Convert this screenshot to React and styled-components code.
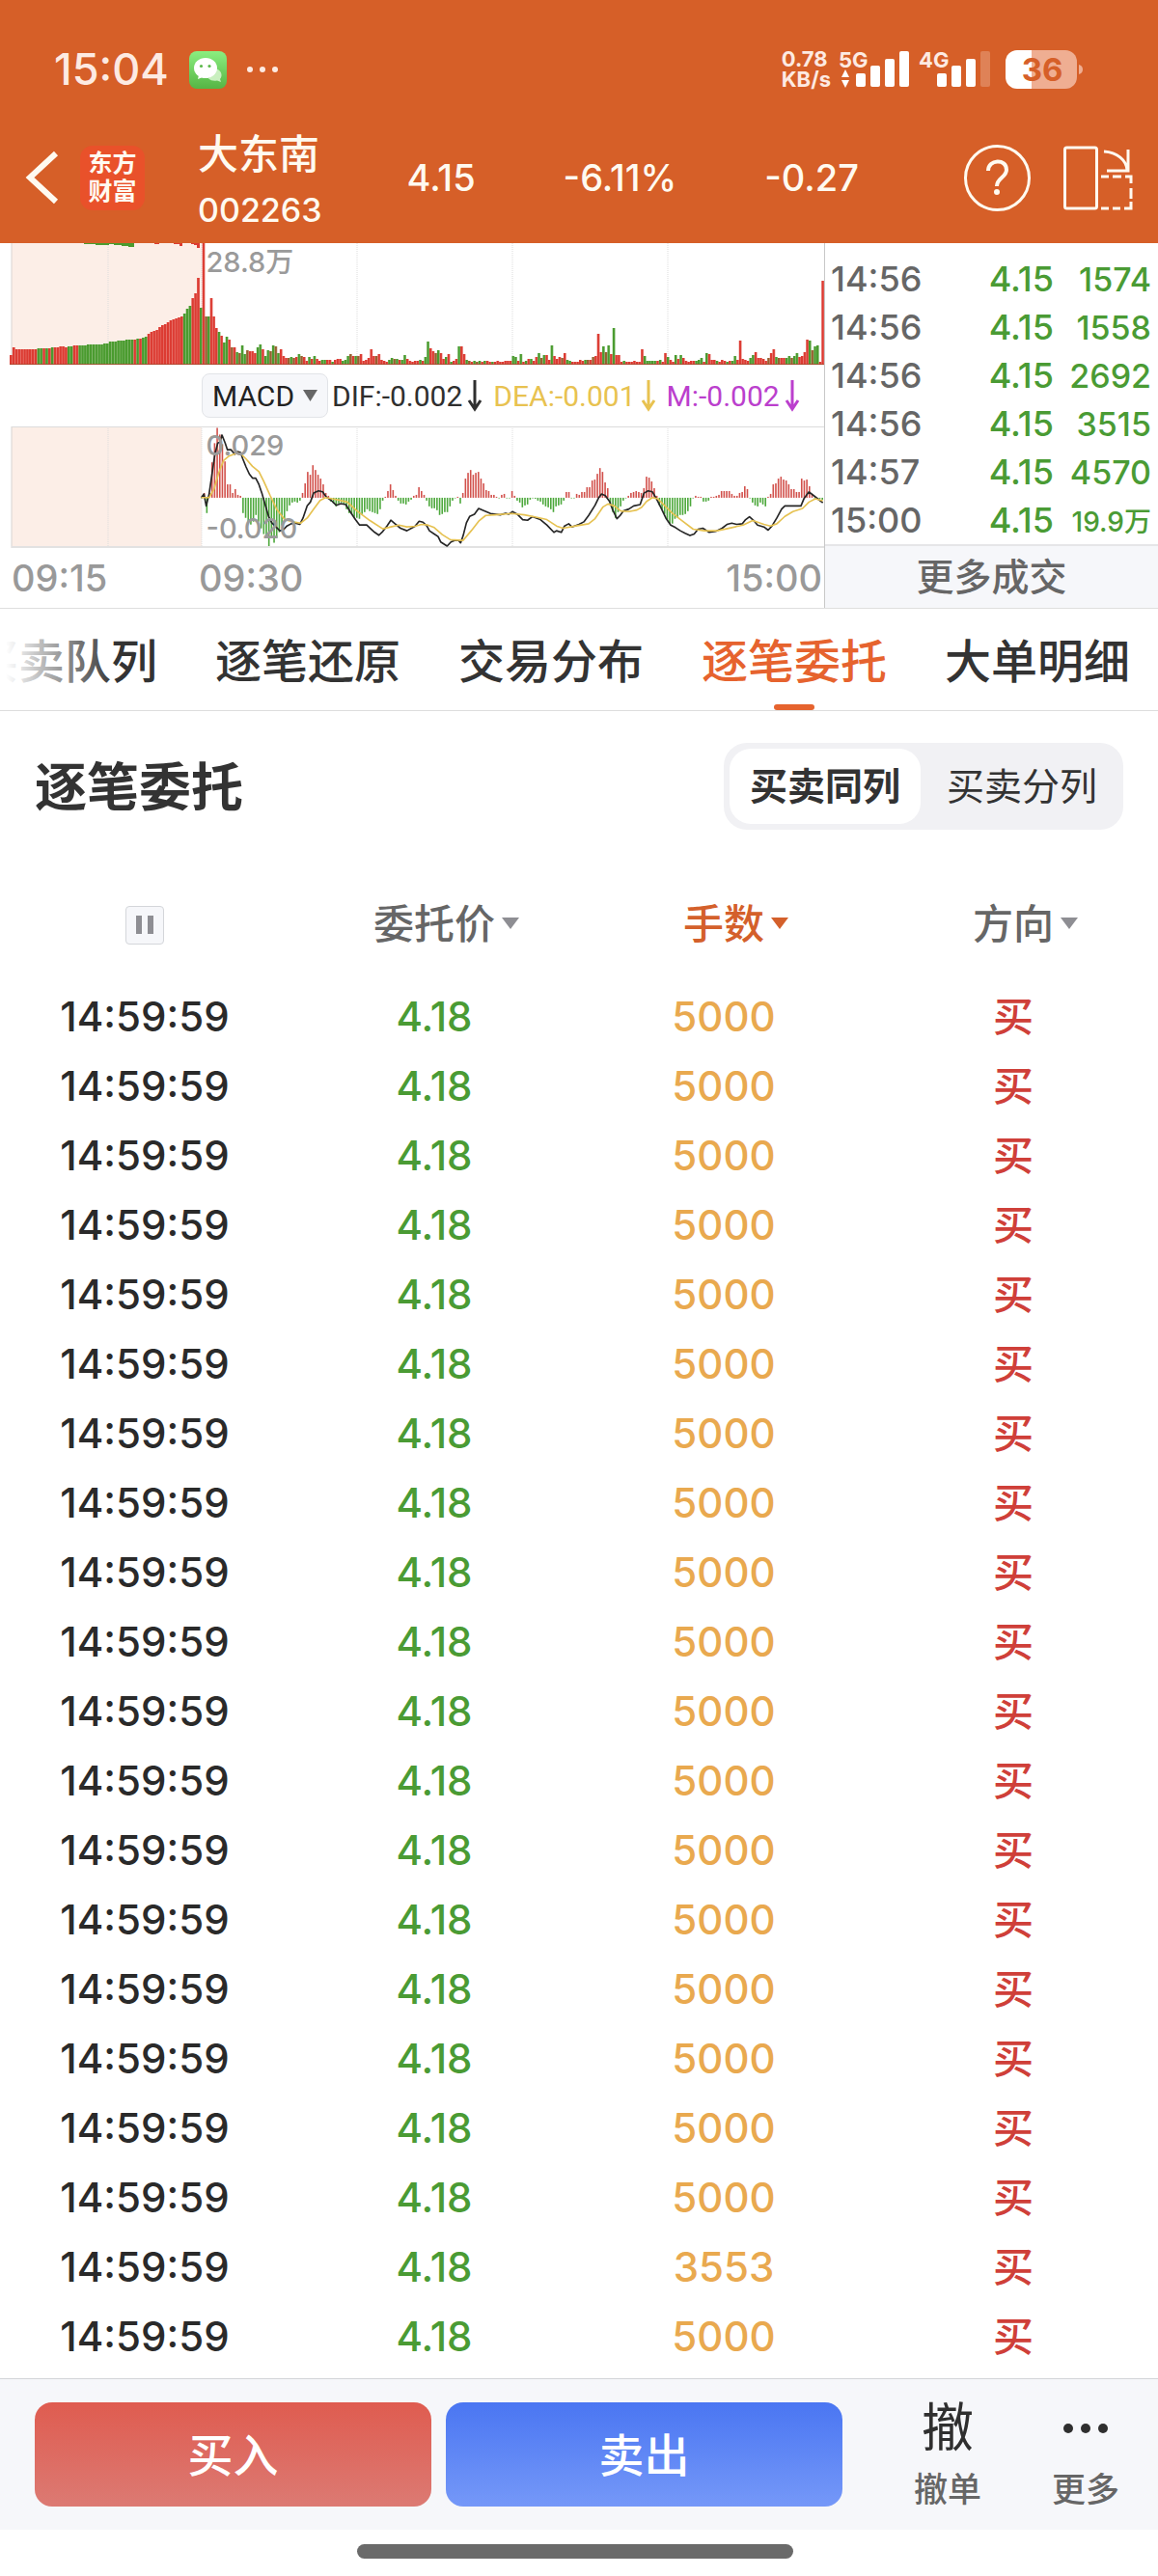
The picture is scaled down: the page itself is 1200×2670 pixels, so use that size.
import React, { useState } from 'react';
import styled, { createGlobalStyle } from 'styled-components';

const GlobalStyle = createGlobalStyle`
  * {
    box-sizing: border-box;
  }

  body {
    margin: 0;
    background: #fff;
    color: #2f2f2f;
    font-family: Inter, "Noto Sans CJK SC", sans-serif;
    font-weight: 500;
  }

  button, select {
    font: inherit;
    color: inherit;
    border: none;
    background: none;
    padding: 0;
    margin: 0;
  }

  svg {
    display: block;
    overflow: visible;
  }
`;

const Page = styled.div`
  display: flex;
  flex-direction: column;
`;

/* ---------- header ---------- */

const Header = styled.header`
  background: #d65f28;
  color: #fffaf0;
  height: 252px;
`;

const StatusBar = styled.div`
  height: 144px;
  padding: 0 78px 0 56px;
  display: flex;
  align-items: center;
  justify-content: space-between;
  color: #fdeae2;
`;

const StatusGroup = styled.div`
  display: flex;
  align-items: center;
  gap: ${({ $gap }) => $gap}px;
`;

const Clock = styled.span`
  font-size: 45px;
  line-height: 54px;
`;

const NetSpeed = styled.span`
  font-size: 22px;
  font-weight: 700;
  line-height: 21px;
`;

const NavBar = styled.div`
  height: 80px;
  padding: 0 26px;
  display: flex;
  align-items: center;
`;

const Logo = styled.span`
  width: 67px;
  height: 67px;
  margin-left: 23px;
  border-radius: 13px;
  background: #e9512a;
  font-size: 25px;
  font-weight: 700;
  line-height: 29px;
  padding-top: 4px;
  text-align: center;
`;

const StockName = styled.div`
  margin-left: 55px;
  padding-top: 10px;
  display: flex;
  flex-direction: column;
  font-size: 42px;
  line-height: 58px;
`;

const StockCode = styled.span`
  font-size: 34px;
`;

const Quote = styled.div`
  flex: 1;
  display: flex;
  justify-content: space-between;
  margin: 0 109px 0 88px;
  font-size: 38px;
  line-height: 48px;
`;

const NavActions = styled.div`
  display: flex;
  gap: 34px;
`;

/* ---------- chart and trades ---------- */

const Market = styled.section`
  display: flex;
  border-bottom: 1px solid #dedede;
`;

const Charts = styled.div`
  flex: 1;
  min-width: 0;
  border-right: 1px solid #c8c8c8;
`;

const Plot = styled.div`
  position: relative;

  svg {
    width: 100%;
    height: 126px;
    overflow: hidden;
  }
`;

const PlotLabel = styled.span`
  position: absolute;
  left: 25%;
  ${({ $end }) => ($end ? 'bottom: 0' : 'top: 0')};
  font-size: 29px;
  line-height: 40px;
  color: #9a9a9a;
`;

const IndicatorBar = styled.div`
  height: 64px;
  margin-left: 209px;
  display: flex;
  align-items: center;
  gap: 12px;
  font-family: "Liberation Sans Narrow", Roboto, sans-serif;
  font-size: 30px;
  font-weight: 400;
  white-space: nowrap;
`;

const Picker = styled.label`
  height: 46px;
  margin-right: -8px;
  padding: 0 10px;
  display: flex;
  align-items: center;
  gap: 8px;
  border: 1px solid #e2e4e8;
  border-radius: 8px;
  background: #f6f7fa;
  color: #222;

  select {
    appearance: none;
    outline: none;
  }

  svg {
    color: #666;
  }
`;

const Reading = styled.span`
  display: flex;
  align-items: center;
  gap: 6px;
  color: ${({ $color }) => $color};
`;

const TimeAxis = styled.div`
  height: 62px;
  padding: 0 2px 0 12px;
  display: grid;
  grid-template-columns: 194px 1fr auto;
  align-items: center;
  font-size: 38px;
  color: #999;
`;

const Trades = styled.div`
  width: 345px;
  display: flex;
  flex-direction: column;
`;

const TradeTable = styled.table`
  width: 100%;
  margin-top: 12px;
  border-collapse: collapse;
  font-size: 36px;

  td {
    height: 50px;
    padding: 0;
  }
`;

const TradeTime = styled.td`
  && {
    padding-left: 6px;
  }
  color: #666;
`;

const TradePrice = styled.td`
  text-align: right;
  color: #4a9b34;
`;

const TradeVolume = styled.td`
  width: 108px;
  text-align: right;
  color: #4a9b34;
  font-size: ${({ $small }) => ($small ? 28 : 34)}px;
  && {
    padding-right: 7px;
  }
`;

const MoreTrades = styled.button`
  flex: 1;
  border-top: 2px solid #e6e6e8;
  background: #f6f7fa;
  color: #666;
  font-size: 39px;
  line-height: 48px;
`;

/* ---------- tabs ---------- */

const TabBar = styled.nav`
  position: relative;
  height: 106px;
  overflow: hidden;
  border-bottom: 1px solid #dedede;

  &::before {
    content: "";
    position: absolute;
    z-index: 1;
    inset: 0 auto 0 0;
    width: 120px;
    background: linear-gradient(90deg, #fff 5%, rgba(255, 255, 255, 0));
  }
`;

const TabList = styled.div`
  height: 100%;
  margin-left: -29px;
  display: flex;
  gap: 60px;
`;

const Tab = styled.a`
  flex: none;
  padding-top: 10px;
  display: flex;
  flex-direction: column;
  align-items: center;
  justify-content: space-between;
  color: ${({ $active }) => ($active ? '#e6632e' : '#333')};
  font-size: 48px;
  line-height: 89px;
  text-decoration: none;

  &::after {
    content: "";
    width: 42px;
    height: 6px;
    border-radius: 3px;
    background: ${({ $active }) => ($active ? '#e6632e' : 'transparent')};
  }
`;

/* ---------- orders ---------- */

const TitleRow = styled.div`
  padding: 33px 36px;
  display: flex;
  align-items: center;
  justify-content: space-between;
`;

const Title = styled.h2`
  margin: 0;
  padding-top: 4px;
  font-size: 54px;
  font-weight: 700;
  line-height: 72px;
  color: #333;
`;

const Segmented = styled.div`
  width: 414px;
  height: 90px;
  padding: 6px;
  display: grid;
  grid-template-columns: 1fr 1fr;
  gap: 6px;
  border-radius: 24px;
  background: #f1f1f4;
`;

const Segment = styled.button`
  padding-bottom: 6px;
  border-radius: 22px;
  background: ${({ $active }) => ($active ? '#fff' : 'transparent')};
  color: #333;
  font-size: 39px;
  font-weight: ${({ $active }) => ($active ? 700 : 400)};
`;

const OrderTable = styled.table`
  width: 100%;
  margin-bottom: 7px;
  table-layout: fixed;
  border-collapse: collapse;
  text-align: center;
  font-size: 42px;

  th {
    height: 125px;
    padding: 0 0 2px;
    font-weight: 500;
  }

  td {
    height: 72px;
    padding: 0;
    line-height: 60px;
  }
`;

const SortButton = styled.button`
  display: inline-flex;
  align-items: center;
  gap: 7px;
  color: ${({ $active }) => ($active ? '#d4602b' : '#666')};

  svg {
    margin: 4px -25px 0 0;
    color: ${({ $active }) => ($active ? '#d4602b' : '#8e8e93')};
  }
`;

const PauseButton = styled.button`
  width: 40px;
  height: 40px;
  border: 1px solid #d4d6da;
  border-radius: 4px;
  background: #f6f7fa;
  display: inline-flex;
  align-items: center;
  justify-content: center;
  vertical-align: middle;
`;

const Cell = styled.td`
  color: ${({ $color }) => $color};
`;

/* ---------- footer ---------- */

const Footer = styled.footer`
  border-top: 1px solid #d2d5d8;
  background: #f6f7fa;
  height: 157px;
  padding: 24px 36px;
  display: flex;
  gap: 15px;
`;

const TradeButton = styled.button`
  flex: 1;
  height: 108px;
  padding-bottom: 6px;
  border-radius: 18px;
  background: linear-gradient(${({ $from, $to }) => `${$from}, ${$to}`});
  color: #fff;
  font-size: 47px;
`;

const FooterLinks = styled.div`
  width: 276px;
  padding: 0 4px 0 59px;
  display: flex;
  justify-content: space-between;
`;

const FooterLink = styled.button`
  display: flex;
  flex-direction: column;
  align-items: center;
  color: #666;
  font-size: 35px;
  line-height: 36px;
`;

const FooterGlyph = styled.span`
  height: 74px;
  display: flex;
  align-items: center;
  padding-bottom: 18px;
  font-size: 54px;
  font-weight: 400;
  color: #2f2f2f;
`;

const HomeArea = styled.div`
  height: 47px;
  display: flex;
  justify-content: center;
  padding: 15px 8px 0 0;
`;

const HomeBar = styled.span`
  width: 38%;
  height: 15px;
  border-radius: 8px;
  background: #6a6a6a;
`;

/* ---------- data ---------- */

const RED = '#dc3b32';
const GREEN = '#4a9b2f';

// call auction: colour and height of every bar
const AUCTION = `r10 r18 r16 r16 r16 r16 r16 r16 r16 r16 g17 g17 r17 g17 r17 g18 r18 r18 r19 r19 r18
g19 g19 r20 r20 g20 g20 g20 g21 g21 g21 g21 g21 g21 g22 g22 g24 g24 g24 g25 g25 g25 g26 g26 g26
r26 g27 r27 g28 g29 r32 r34 r35 r36 r39 r41 r42 r44 r46 r47 r48 r49 r50 g53 g58 g61 r69 r74 r90`;

// continuous trading, one bar a minute
const VOLUME = `g59 r126 m50 g50 r69 r50 r38 g34 r30 g23 g29 r26 m18 r18 g13 m12 g20 g11 m15 r14 r14 r12 g18 g21
r16 g9 g15 m14 g20 m19 g12 r16 r9 r7 m7 g8 m7 r8 g11 m9 r8 r4 g8 r6 g9 r6 r4 g5 g5 r5 r5 g3 r5 r6 r6
g4 g5 g9 m11 r9 g9 m9 r11 r4 r5 r7 r16 r9 m9 r11 r5 r4 r3 g5 g7 m6 g6 r5 g5 g10 r6 r4 r3 r4 r4 g5 r4
g8 g24 r17 r14 m12 g15 r12 r6 g8 r11 g3 r4 r6 g19 r19 r11 g5 m4 r3 g4 m3 g4 r3 g4 r4 r3 g3 r3 r4 r3 r3
r4 r4 r4 g9 g8 r4 g11 r3 g4 r6 g6 r4 r8 g12 m7 g10 r10 r5 g20 r9 r6 r8 m7 r12 g5 g4 r3 r3 r3 r5 r4 g5
m5 r5 m8 r9 r32 r13 g19 m13 g20 r11 g38 r10 r10 r3 g4 r3 r3 r3 r4 r3 r3 r16 g9 g4 g4 g4 g4 r4 g5 r3
r12 g8 r5 r3 g10 r6 g10 r7 r4 r3 r4 r4 g4 g5 g7 r3 g12 r11 r5 r5 g4 r3 r5 r4 g3 r4 g4 g9 r5 r25 r6
r5 r4 g7 g10 r13 r7 r7 r6 r4 m7 r12 r16 g8 m7 r7 r7 g7 g9 m7 g9 g12 r8 r9 r13 r26 g25 m15 g19 g20 r3 r87`;

const MACD = [
  0, 5, -16, 5, 37, 57, 73, 66, 56, 38, 14, 14, 5, 9, 3, 2, -16, -21, -25, -28, -25, -18, -25, -32, -38, -42,
  -52, -42, -47, -42, -36, -29, -24, -14, -8, -5, -4, -5, -3, 5, 15, 27, 24, 34, 29, 24, 20, 14, 5, 2, -4, -6,
  -9, -6, -5, -7, -12, -16, -17, -20, -21, -22, -17, -15, -12, -14, -15, -16, -17, -12, -3, 1, 7, 14, 8, 2,
  -3, -6, -6, -7, -4, -2, 2, 3, 11, 7, 3, -3, -9, -11, -11, -13, -18, -17, -15, -15, -9, -3, 0, 1, -6, 5, 20,
  26, 29, 24, 26, 27, 20, 15, 8, 7, 3, 3, 1, 0, 3, 4, 0, 0, 7, 2, -3, -5, -10, -8, -7, -2, 0, -1, -3, -4, -7,
  -9, -10, -12, -15, -9, -8, -7, -3, 6, 6, 0, 0, 4, 3, 6, 6, 11, 11, 18, 19, 25, 31, 27, 16, 10, -6, -15, -21,
  -15, -9, -3, 0, 2, 5, 6, 7, 6, 5, 10, 22, 21, 17, 10, 2, -8, -12, -17, -23, -27, -27, -22, -21, -18, -18,
  -17, -14, -9, 0, 2, 1, 1, -4, -4, -3, 1, 1, 2, 3, 7, 7, 7, 7, 4, 2, 2, 5, 6, 12, 9, 0, -5, -8, -9, -5, -7,
  -9, 1, 4, 14, 15, 20, 22, 19, 18, 14, 9, 9, 6, 6, 20, 18, 19, 12, 4, 0, -1, -1, -2, -3,
];

const DIF_LINE = `626,223 634,212 641,249 650,212 658,157 668,87 677,52 684,49 690,27 700,52 707,73 718,73 730,87
738,79 748,82 755,102 765,127 775,149 785,162 795,162 805,182 815,212 825,247 835,282 845,302 858,315 870,327
880,325 892,312 905,305 918,303 932,307 942,287 955,249 965,237 975,209 990,202 1003,205 1015,222 1030,232
1045,247 1060,242 1075,245 1090,269 1105,292 1118,309 1140,309 1155,323 1165,332 1178,341 1190,329 1203,312
1215,294 1228,305 1245,319 1265,327 1290,313 1303,297 1315,300 1327,312 1335,327 1350,337 1362,345 1370,362
1390,375 1402,362 1415,357 1425,357 1432,365 1440,342 1450,302 1460,282 1475,275 1488,257 1502,263 1525,273
1555,277 1572,272 1582,275 1593,267 1608,275 1625,292 1640,294 1655,283 1680,292 1700,309 1722,332 1730,327
1745,332 1755,312 1768,305 1778,315 1800,307 1815,299 1830,279 1850,247 1862,222 1870,212 1882,217 1895,235
1905,262 1918,289 1928,279 1938,265 1955,259 1970,249 1990,245 2002,209 2015,202 2028,205 2040,225 2055,255
2070,287 2085,309 2100,317 2115,327 2130,335 2145,342 2158,337 2170,322 2185,319 2205,332 2225,329 2245,319
2260,307 2275,303 2290,307 2308,305 2318,292 2330,283 2345,297 2355,309 2375,315 2388,325 2400,312 2415,287
2430,259 2440,249 2490,249 2500,225 2515,205 2530,217 2545,229 2558,239`;

const DEA_LINE = `626,223 650,223 665,197 680,145 695,107 710,94 735,84 750,87 765,102 785,125 805,142 820,172
840,217 860,259 885,292 910,299 935,303 955,287 975,259 995,232 1012,223 1045,229 1080,237 1110,265 1150,295
1190,321 1215,315 1240,309 1265,315 1290,313 1310,307 1330,309 1350,317 1375,339 1400,355 1440,357 1465,327
1490,295 1510,279 1540,277 1590,273 1630,277 1670,285 1700,292 1730,312 1750,319 1790,312 1830,305 1850,289
1875,252 1890,243 1910,249 1930,265 1955,267 1980,262 1995,253 2010,235 2028,223 2045,227 2065,247 2090,272
2120,295 2155,322 2190,327 2230,327 2275,317 2310,309 2340,295 2375,307 2395,312 2415,305 2440,282 2465,267
2495,257 2515,237 2535,227 2558,233`;

const GRID = [112, 209, 370, 531, 692];

const TRADES = [
  ['14:56', '4.15', '1574'],
  ['14:56', '4.15', '1558'],
  ['14:56', '4.15', '2692'],
  ['14:56', '4.15', '3515'],
  ['14:57', '4.15', '4570'],
  ['15:00', '4.15', '19.9万'],
];

const TABS = ['买卖队列', '逐笔还原', '交易分布', '逐笔委托', '大单明细'];

const ORDERS = Array.from({ length: 20 }, (_, i) => ({
  time: '14:59:59',
  price: '4.18',
  lots: i === 18 ? '3553' : '5000',
  side: '买',
}));

/* ---------- drawings ---------- */

const parseBars = (text) =>
  text.split(/\s+/).map((item) => ({ kind: item[0], h: Number(item.slice(1)) }));

const barColor = { r: RED, g: GREEN, m: '#96602f' };

// spreads the bars evenly between start and end
const Bars = ({ data, start, end }) => {
  const bars = parseBars(data);
  const step = (end - start) / bars.length;
  return bars.map(({ kind, h }, i) => (
    <g key={i}>
      <rect x={start + i * step} y={126 - h} width={step} height={h} fill={barColor[kind]} />
      <rect x={start + (i + 1) * step - 0.5} y={126 - h} width="0.5" height={h} fill="#fff" opacity="0.3" />
    </g>
  ));
};

const Grid = ({ height = 126 }) => (
  <>
    <rect x="12" y="0" width="197" height={height} fill="#fceee7" />
    <line x1="12" x2="12" y1="0" y2={height} stroke="#d8d4d2" />
    {GRID.map((x) => (
      <line key={x} x1={x} x2={x} y1="0" y2={height} stroke="#dcdcdc" strokeDasharray="1 1" />
    ))}
  </>
);

const VolumeChart = () => (
  <svg viewBox="0 0 854 126" preserveAspectRatio="none" aria-hidden="true">
    <Grid />
    <path d="M87 0h52v4h-6v-1h-7v-1h-8v-1h-5v1h-14v-1h-12z" fill={GREEN} />
    <path d="M160 0h5v1h-5zM180 0h9v3h-3v-2h-6zM198 0h9v5h-3v-3h-3v-1h-3z" fill={RED} />
    <Bars data={AUCTION} start={10} end={207} />
    <Bars data={VOLUME} start={207} end={854} />
    <line x1="10" x2="854" y1="125.7" y2="125.7" stroke="#a8442c" />
  </svg>
);

const MacdChart = () => (
  <svg viewBox="0 0 854 127" preserveAspectRatio="none" aria-hidden="true">
    <Grid height={127} />
    {MACD.map((v, i) => (
      <rect
        key={i}
        x={208.2 + i * 2.68}
        y={v > 0 ? 74.5 - v : 74.5}
        width="1.6"
        height={Math.max(Math.abs(v), 0.6)}
        fill={v > 0 ? '#d2514c' : '#4da83c'}
      />
    ))}
    <line x1="12" x2="854" y1="0.5" y2="0.5" stroke="#dcdcdc" />
    <line x1="12" x2="854" y1="126" y2="126" stroke="#e2e2e2" strokeWidth="2" />
    <g transform="scale(0.33333)" fill="none" strokeWidth="5" strokeLinejoin="round">
      <polyline points={DIF_LINE} stroke="#262626" />
      <polyline points={DEA_LINE} stroke="#e6c252" />
    </g>
  </svg>
);

const Caret = ({ width = 18, height = 12 }) => (
  <svg width={width} height={height} viewBox="0 0 18 12" preserveAspectRatio="none" aria-hidden="true">
    <path d="M0 0h18L9 12z" fill="currentColor" />
  </svg>
);

const DownArrow = () => (
  <svg width="14" height="33" viewBox="0 0 14 33" fill="none" stroke="currentColor" strokeWidth="3" aria-hidden="true">
    <path d="M7 0v30M1 21l6 9 6-9" />
  </svg>
);

const WeChatIcon = () => (
  <svg width="39" height="39" viewBox="0 0 39 39" aria-hidden="true">
    <defs>
      <linearGradient id="wechat" x1="0" y1="0" x2="0" y2="1">
        <stop offset="0" stopColor="#8bee80" />
        <stop offset="1" stopColor="#56b544" />
      </linearGradient>
    </defs>
    <rect width="39" height="39" rx="8" fill="url(#wechat)" />
    <path d="M27 18a8 7 0 0 1 5 11l1 3-4-1.500a9 7 0 0 1-9-2z" fill="#c9efbf" />
    <ellipse cx="17" cy="17.500" rx="12" ry="10.500" fill="#fff" />
    <path d="M10 25l-1 4 5-2z" fill="#fff" />
    <circle cx="12.500" cy="15.500" r="1.600" fill="#5cb84c" />
    <circle cx="21" cy="15.500" r="1.600" fill="#5cb84c" />
  </svg>
);

const Dots = ({ gap, r }) => (
  <svg width={gap * 2 + r * 2} height={r * 2} aria-hidden="true">
    {[0, 1, 2].map((i) => (
      <circle key={i} cx={r + i * gap} cy={r} r={r} fill="currentColor" />
    ))}
  </svg>
);

const Signal = ({ label, offset, weak, arrows }) => (
  <svg width={offset + 57} height="40" role="img" aria-label={label}>
    <text x="0" y="18" fontSize="22" fontWeight="700" fill="#fdeae2">{label}</text>
    {arrows && <path d="M3 28l4-8 4 8zM3 31l4 8 4-8z" fill="#fff" />}
    {[14, 22, 29, 37].map((h, i) => (
      <rect
        key={h}
        x={offset + i * 15}
        y={38 - h}
        width="10"
        height={h}
        rx="2"
        fill="#fff"
        opacity={weak && i === 3 ? 0.22 : 1}
      />
    ))}
  </svg>
);

const Battery = () => (
  <svg width="80" height="40" role="img" aria-label="36%">
    <path d="M12 0h15v40H12a12 12 0 0 1-12-12V12A12 12 0 0 1 12 0z" fill="#fff" />
    <path d="M27 0h35a12 12 0 0 1 12 12v16a12 12 0 0 1-12 12H27z" fill="#efae92" />
    <path d="M76 15q4 1 4 5t-4 5z" fill="#efae92" />
    <text x="38" y="32" fontSize="33" fontWeight="700" textAnchor="middle" fill="#d65f28">36</text>
  </svg>
);

const BackIcon = () => (
  <svg width="34" height="56" viewBox="0 0 34 56" fill="none" stroke="currentColor" strokeWidth="6" aria-hidden="true">
    <path d="M32 3L5 28l27 25" />
  </svg>
);

const HelpIcon = () => (
  <svg width="69" height="69" viewBox="0 0 69 69" fill="none" stroke="currentColor" aria-hidden="true">
    <circle cx="34.500" cy="34.500" r="33" strokeWidth="3" />
    <path d="M25 27c0-12 19-13 19-1 0 8-10 8-10 17" strokeWidth="4" />
    <circle cx="34" cy="49" r="3" fill="currentColor" stroke="none" />
  </svg>
);

const RotateIcon = () => (
  <svg width="72" height="67" viewBox="0 0 72 67" fill="none" stroke="currentColor" strokeWidth="3" aria-hidden="true">
    <rect x="1.500" y="2" width="33" height="63" rx="2" />
    <path d="M42 6c14 1 23 9 24 19M67 4v22H45" />
    <path d="M39 32h8M51 32h9M64 32h6v7M70 44v11M70 58v7h-7M59 65h-8M47 65h-8" />
  </svg>
);

/* ---------- page ---------- */

const MarketPanel = () => (
  <Market>
    <Charts>
      <Plot>
        <VolumeChart />
        <PlotLabel>28.8万</PlotLabel>
      </Plot>
      <IndicatorBar>
        <Picker>
          <select aria-label="指标">
            <option>MACD</option>
          </select>
          <Caret width={15} height={12} />
        </Picker>
        <Reading $color="#2f2f2f">DIF:-0.002<DownArrow /></Reading>
        <Reading $color="#e8c250">DEA:-0.001<DownArrow /></Reading>
        <Reading $color="#bb3fcd">M:-0.002<DownArrow /></Reading>
      </IndicatorBar>
      <Plot>
        <MacdChart />
        <PlotLabel>0.029</PlotLabel>
        <PlotLabel $end>-0.020</PlotLabel>
      </Plot>
      <TimeAxis>
        <span>09:15</span>
        <span>09:30</span>
        <span>15:00</span>
      </TimeAxis>
    </Charts>
    <Trades>
      <TradeTable>
        <tbody>
          {TRADES.map(([time, price, volume]) => (
            <tr key={time + volume}>
              <TradeTime>{time}</TradeTime>
              <TradePrice>{price}</TradePrice>
              <TradeVolume $small={volume.endsWith('万')}>{volume}</TradeVolume>
            </tr>
          ))}
        </tbody>
      </TradeTable>
      <MoreTrades type="button">更多成交</MoreTrades>
    </Trades>
  </Market>
);

const OrderPanel = () => {
  const [mode, setMode] = useState('买卖同列');
  return (
    <section>
      <TitleRow>
        <Title>逐笔委托</Title>
        <Segmented>
          {['买卖同列', '买卖分列'].map((name) => (
            <Segment key={name} type="button" $active={mode === name} onClick={() => setMode(name)}>
              {name}
            </Segment>
          ))}
        </Segmented>
      </TitleRow>
      <OrderTable>
        <thead>
          <tr>
            <th>
              <PauseButton type="button" aria-label="暂停">
                <svg width="20" height="19" aria-hidden="true">
                  <path d="M1 0h6v19H1zM13 0h6v19h-6z" fill="#8e8e93" />
                </svg>
              </PauseButton>
            </th>
            <th><SortButton type="button">委托价<Caret /></SortButton></th>
            <th><SortButton type="button" $active>手数<Caret /></SortButton></th>
            <th><SortButton type="button">方向<Caret /></SortButton></th>
          </tr>
        </thead>
        <tbody>
          {ORDERS.map((order, i) => (
            <tr key={i}>
              <Cell $color="#2a2a2a">{order.time}</Cell>
              <Cell $color="#4a9b34">{order.price}</Cell>
              <Cell $color="#e9a94f">{order.lots}</Cell>
              <Cell $color="#cf3f39">{order.side}</Cell>
            </tr>
          ))}
        </tbody>
      </OrderTable>
    </section>
  );
};

export default function App() {
  return (
    <Page>
      <GlobalStyle />
      <Header>
        <StatusBar>
          <StatusGroup $gap={21}>
            <Clock>15:04</Clock>
            <WeChatIcon />
            <Dots gap={13} r={3} />
          </StatusGroup>
          <StatusGroup $gap={14}>
            <StatusGroup $gap={8}>
              <NetSpeed>0.78<br />KB/s</NetSpeed>
              <Signal label="5G" offset={18} arrows />
              <Signal label="4G" offset={19} weak />
            </StatusGroup>
            <Battery />
          </StatusGroup>
        </StatusBar>
        <NavBar>
          <button type="button" aria-label="返回"><BackIcon /></button>
          <Logo>东方<br />财富</Logo>
          <StockName>
            大东南
            <StockCode>002263</StockCode>
          </StockName>
          <Quote>
            <span>4.15</span>
            <span>-6.11%</span>
            <span>-0.27</span>
          </Quote>
          <NavActions>
            <button type="button" aria-label="帮助"><HelpIcon /></button>
            <button type="button" aria-label="横屏"><RotateIcon /></button>
          </NavActions>
        </NavBar>
      </Header>
      <MarketPanel />
      <TabBar>
        <TabList>
          {TABS.map((name) => (
            <Tab key={name} href="#" $active={name === '逐笔委托'}>{name}</Tab>
          ))}
        </TabList>
      </TabBar>
      <OrderPanel />
      <Footer>
        <TradeButton type="button" $from="#df5c50" $to="#dc7a73">买入</TradeButton>
        <TradeButton type="button" $from="#4a76f2" $to="#7598f8">卖出</TradeButton>
        <FooterLinks>
          <FooterLink type="button">
            <FooterGlyph>撤</FooterGlyph>
            撤单
          </FooterLink>
          <FooterLink type="button">
            <FooterGlyph><Dots gap={18} r={5} /></FooterGlyph>
            更多
          </FooterLink>
        </FooterLinks>
      </Footer>
      <HomeArea>
        <HomeBar />
      </HomeArea>
    </Page>
  );
}
